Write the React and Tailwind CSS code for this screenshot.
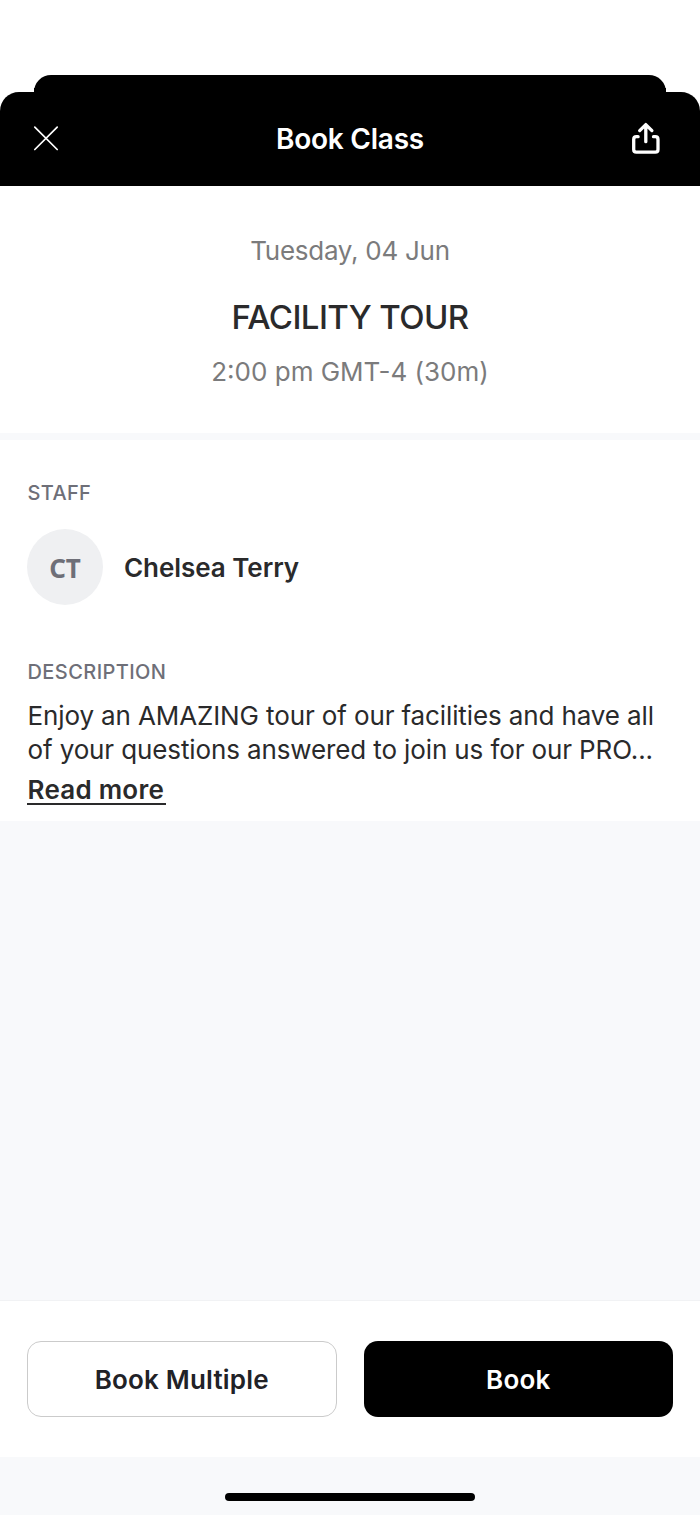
function CloseIcon() {
  return (
    <svg className="h-[26px] w-[26px]" viewBox="0 0 26 26" fill="none" stroke="#fff" strokeWidth="1.7" strokeLinecap="round">
      <path d="M1.8 2.1 24.2 24.5M24.2 2.1 1.8 24.5" />
    </svg>
  );
}

function ShareIcon() {
  return (
    <svg className="h-8 w-7" viewBox="0 0 28 32" fill="none" stroke="#fff" strokeWidth="3.3" strokeLinecap="round" strokeLinejoin="round">
      <path d="M13.8 19.7V3.4M7.7 8.6 13.8 2.6 19.9 8.6" />
      <path d="M6.1 14.7H4.4Q1.7 14.7 1.7 17.4V27.4Q1.7 30.1 4.4 30.1H23.3Q26 30.1 26 27.4V17.4Q26 14.7 23.3 14.7H21.5" />
    </svg>
  );
}

export default function App() {
  return (
    <div className="flex h-[1515px] w-[700px] flex-col overflow-hidden bg-white pt-[74.5px] font-['Inter',sans-serif] text-[#2a2a2b]">
      <div className="mx-[34px] h-[17px] shrink-0 rounded-t-[17px] bg-black" />
      <header className="relative flex h-[94.5px] shrink-0 items-center justify-between rounded-t-[19px] bg-black px-8 pb-[1.5px] text-white before:absolute before:left-[34px] before:right-[34px] before:-top-1 before:h-2 before:bg-black">
        <div className="w-8 pl-px"><CloseIcon /></div>
        <h1 className="pt-[2px] text-[28px] font-semibold leading-10 tracking-[-0.25px]">Book Class</h1>
        <div className="flex w-8 justify-end"><div className="mr-2"><ShareIcon /></div></div>
      </header>

      <section className="flex h-[254px] shrink-0 flex-col items-center border-b-[7px] border-[#f8f9fb] pt-[45px]">
        <p className="text-[26px] leading-10 tracking-[-0.27px] text-[#7b7b7c]">Tuesday, 04 Jun</p>
        <h2 className="mt-[21px] text-[33px] font-medium leading-[50px] tracking-[-0.6px]">FACILITY TOUR</h2>
        <p className="mt-[10px] text-[26px] leading-10 text-[#7b7b7c]">2:00 pm GMT-4 (30m)</p>
      </section>

      <section className="h-[381px] shrink-0 px-[27px] pt-[38px]">
        <h3 className="pl-[0.5px] text-[20px] font-medium leading-[30px] tracking-[0.35px] text-[#6e6f78]">STAFF</h3>
        <div className="mt-[21px] flex items-center">
          <div className="flex h-[76px] w-[76px] items-center justify-center rounded-full bg-[#eff0f2] pt-[2px] font-['Noto_Sans',sans-serif] text-[26px] font-bold text-[#6e6f78]">CT</div>
          <span className="ml-[21px] pt-[2px] text-[26px] font-semibold leading-10 tracking-[-0.05px]">Chelsea Terry</span>
        </div>
        <h3 className="mt-[52px] pl-[0.5px] text-[20px] font-medium leading-[30px] tracking-[0.42px] text-[#6e6f78]">DESCRIPTION</h3>
        <p className="mt-3 whitespace-nowrap pl-[0.5px] text-[26px] leading-[34px] tracking-[-0.12px]">
          <span className="block">Enjoy an AMAZING tour of our facilities and have all</span>
          <span className="block">of your questions answered to join us for our PRO...</span>
        </p>
        <a className="mt-[6px] block h-[32px] w-[139px] whitespace-nowrap border-b-2 border-[#2a2a2b] pl-[0.5px] text-[26px] font-semibold leading-[34px] tracking-[0.25px]">Read more</a>
      </section>

      <div className="flex-1 bg-[#f8f9fb]" />

      <footer className="flex h-[157px] shrink-0 justify-between border-t border-[#f1f2f4] bg-white px-[27px] pt-[39.5px]">
        <button className="h-[76.5px] w-[309.5px] rounded-[14px] border border-[#cbcbcb] pt-[1.5px] text-[26px] font-semibold tracking-[0.2px] text-[#212227]">Book Multiple</button>
        <button className="h-[76.5px] w-[309.5px] rounded-[14px] bg-black pt-[1.5px] text-[26px] font-semibold tracking-[0.2px] text-white">Book</button>
      </footer>
      <div className="flex h-[58px] shrink-0 justify-center bg-[#f8f9fb] pt-[35.5px]">
        <div className="h-[8.5px] w-[250px] rounded-full bg-black" />
      </div>
    </div>
  );
}
